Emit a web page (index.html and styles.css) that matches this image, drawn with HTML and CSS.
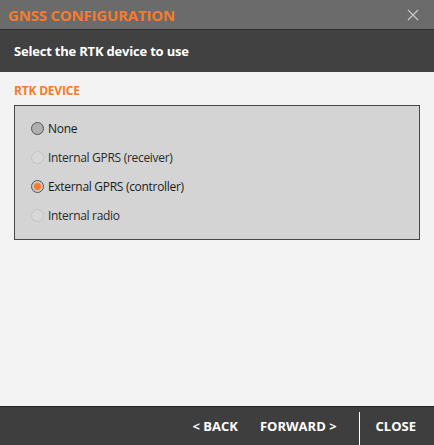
FILE: index.html
```html
<!DOCTYPE html>
<html>
<head>
<meta charset="utf-8">
<link rel="stylesheet" href="styles.css">
</head>
<body>
<div class="window">
  <div class="titlebar">
    <span class="title">GNSS CONFIGURATION</span>
    <svg class="close-x" width="12" height="12" viewBox="0 0 12 12"><path d="M1 1 L11 11 M11 1 L1 11" stroke="#c8c8c8" stroke-width="1.2" fill="none"/></svg>
  </div>
  <div class="header">Select the RTK device to use</div>
  <div class="content">
    <div class="section-label">RTK DEVICE</div>
    <div class="group">
      <label class="radio-row"><span class="radio"></span><span class="label">None</span></label>
      <label class="radio-row disabled"><span class="radio"></span><span class="label">Internal GPRS (receiver)</span></label>
      <label class="radio-row checked"><span class="radio"><span class="dot"></span></span><span class="label">External GPRS (controller)</span></label>
      <label class="radio-row disabled"><span class="radio"></span><span class="label">Internal radio</span></label>
    </div>
  </div>
  <div class="footer">
    <span class="btn">&lt; BACK</span>
    <span class="btn">FORWARD &gt;</span>
    <span class="sep"></span>
    <span class="btn close">CLOSE</span>
  </div>
</div>
</body>
</html>
```
FILE: styles.css
```css
html, body {
  margin: 0;
  padding: 0;
}
body {
  width: 434px;
  height: 445px;
  font-family: "Open Sans", "Noto Sans", sans-serif;
  overflow: hidden;
}
.window {
  display: flex;
  flex-direction: column;
  height: 445px;
  background: #f3f3f3;
}
.titlebar {
  height: 29px;
  background: #6b6b6b;
  display: flex;
  align-items: center;
  justify-content: space-between;
  padding: 0 15px 0 8px;
  border-bottom: 1px solid #2e2e2e;
  box-sizing: content-box;
}
.title {
  color: #f47c2c;
  font-weight: 700;
  font-size: 15px;
  letter-spacing: -0.2px;
}
.close-x {
  display: block;
}
.header {
  height: 42px;
  background: #414141;
  color: #ffffff;
  font-weight: 700;
  font-size: 13px;
  display: flex;
  align-items: center;
  padding-left: 14px;
  letter-spacing: -0.2px;
}
.content {
  flex: 1;
  padding: 12px 14px 0 14px;
}
.section-label {
  color: #f47c2c;
  font-weight: 700;
  font-size: 12px;
  line-height: 14px;
  letter-spacing: -0.2px;
}
.group {
  margin-top: 7px;
  width: 406px;
  height: 135px;
  background: #d4d4d4;
  border: 1px solid #474747;
  padding: 8px 0 0 16px;
  box-sizing: border-box;
  display: flex;
  flex-direction: column;
}
.radio-row {
  display: flex;
  align-items: center;
  height: 29px;
  gap: 4px;
  font-size: 12px;
  color: #1a1a1a;
  letter-spacing: -0.3px;
}
.radio {
  width: 11px;
  height: 11px;
  border-radius: 50%;
  border: 1px solid #555555;
  background: #b0b0b0;
  display: flex;
  align-items: center;
  justify-content: center;
}
.disabled .radio {
  border-color: #c4c4c4;
  background: #d8d8d8;
}
.disabled .label {
  color: #2a2a2a;
}
.checked .radio {
  background: #c8c8c8;
}
.dot {
  width: 7px;
  height: 7px;
  border-radius: 50%;
  background: #f47c2c;
}
.footer {
  height: 38px;
  background: #3e3e3e;
  border-top: 1px solid #262626;
  display: flex;
  align-items: center;
  justify-content: flex-end;
  padding-right: 18px;
  color: #ffffff;
  font-weight: 700;
  font-size: 13px;
}
.btn {
  margin-left: 22px;
}
.sep {
  align-self: flex-end;
  width: 1px;
  height: 33px;
  background: #ffffff;
  margin-left: 22px;
}
.btn.close {
  margin-left: 16px;
}
```
